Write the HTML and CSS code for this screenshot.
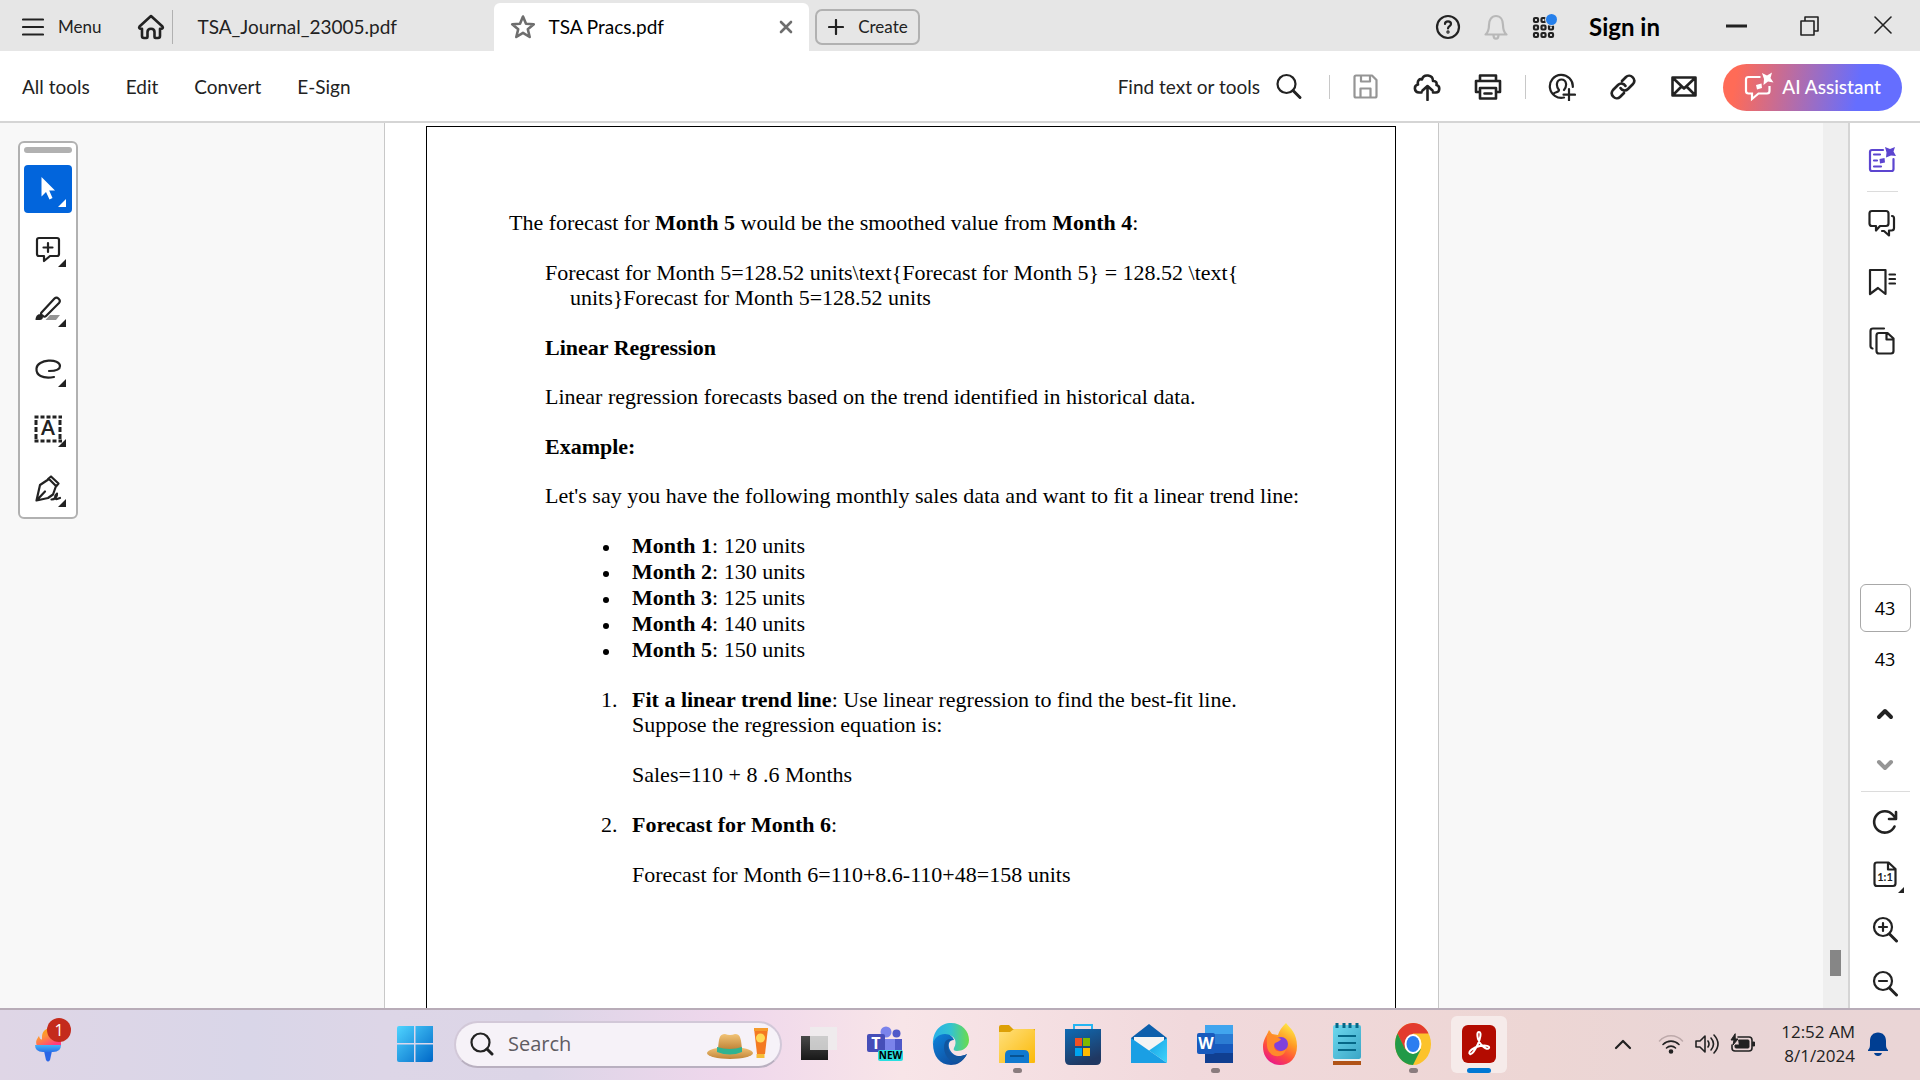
FILE: index.html
```html
<!DOCTYPE html>
<html lang="en">
<head>
<meta charset="utf-8">
<title>TSA Pracs.pdf</title>
<link rel="stylesheet" href="styles.css">
</head>
<body>
<header class="titlebar">
  <button class="menu-btn">
    <svg width="22" height="20" viewBox="0 0 22 20" class="ico"><path d="M1 2.500h20M1 10h20M1 17.500h20"/></svg>
    Menu
  </button>
  <button class="home-btn" aria-label="Home">
    <svg width="28" height="26" viewBox="0 0 28 26" class="ico heavy"><path d="M14 2 2.500 12.500c-.9 1 0 2.300 1.200 2.300H5V22q0 2 2 2h2.500q1 0 1-1v-5q0-3.200 3.500-3.200t3.500 3.200v5q0 1 1 1H21q2 0 2-2v-7.200h1.300c1.200 0 2.100-1.300 1.200-2.300z"/></svg>
  </button>
  <span class="tab-divider"></span>
  <button class="tab">TSA_Journal_23005.pdf</button>
  <div class="tab active">
    <button class="star" aria-label="Star file"><svg width="26" height="26" viewBox="0 0 26 26" class="ico heavy grey"><path d="m13 2.500 3 7.200 7.800.6-6 5 1.900 7.700-6.700-4.200L6.300 23l1.900-7.700-6-5 7.800-.6z"/></svg></button>
    <span class="tab-name">TSA Pracs.pdf</span>
    <button class="tab-close" aria-label="Close tab"><svg width="14" height="14" viewBox="0 0 14 14" class="ico heavy grey"><path d="m2 2 10 10M12 2 2 12"/></svg></button>
  </div>
  <button class="create-btn">
    <svg width="16" height="16" viewBox="0 0 16 16" class="ico"><path d="M8 1v14M1 8h14"/></svg>
    Create
  </button>
  <div class="title-actions">
    <button aria-label="Help"><svg width="26" height="26" viewBox="0 0 26 26" class="ico"><circle cx="13" cy="13" r="11"/><path d="M10 10c0-3.500 6-3.500 6 0 0 2-3 2.200-3 4.500"/><circle cx="13" cy="18" r=".6"/></svg></button>
    <button aria-label="Notifications"><svg width="26" height="28" viewBox="0 0 26 28" class="ico pale"><path d="M2.500 21.500C5 19.500 6 17 6 12c0-5 2.500-9 7-9s7 4 7 9c0 5 1 7.500 3.500 9.500zM10.500 22c0 5 5 5 5 0"/></svg></button>
    <button aria-label="Apps"><svg width="28" height="28" viewBox="0 0 28 28" class="ico"><g><rect x="3" y="5" width="4" height="4" rx="1"/><rect x="10.500" y="5" width="4" height="4" rx="1"/><rect x="3" y="12.500" width="4" height="4" rx="1"/><rect x="10.500" y="12.500" width="4" height="4" rx="1"/><rect x="18" y="12.500" width="4" height="4" rx="1"/><rect x="3" y="20" width="4" height="4" rx="1"/><rect x="10.500" y="20" width="4" height="4" rx="1"/><rect x="18" y="20" width="4" height="4" rx="1"/></g><circle cx="20.500" cy="6.500" r="6.500" fill="#e6e6e6" stroke="none"/><circle cx="20.500" cy="6.500" r="5.500" fill="#2680eb" stroke="none"/></svg></button>
    <a class="sign-in" href="#">Sign in</a>
  </div>
  <div class="window-actions">
    <button aria-label="Minimize"><svg width="22" height="22" viewBox="0 0 22 22"><path d="M0 8.500h21v3H0z" fill="#222"/></svg></button>
    <button aria-label="Restore"><svg width="22" height="22" viewBox="0 0 22 22" class="ico thin"><path d="M2 5h13v14H2zM6 5V1h13v14h-4"/></svg></button>
    <button aria-label="Close"><svg width="22" height="22" viewBox="0 0 22 22" class="ico thin"><path d="m3 1 16 16M19 1 3 17"/></svg></button>
  </div>
</header>

<nav class="toolbar">
  <div class="tool-menu">
    <button>All tools</button><button>Edit</button><button>Convert</button><button>E-Sign</button>
  </div>
  <div class="tool-icons">
    <button class="find">Find text or tools
      <svg width="28" height="28" viewBox="0 0 28 28" class="ico"><circle cx="11.500" cy="11" r="9"/><path d="m18 17.500 7 7" stroke-width="3"/></svg></button>
    <span class="sep"></span>
    <div class="icon-set">
      <button aria-label="Save"><svg width="28" height="28" viewBox="0 0 28 28" class="ico faint"><path d="M4 2.500h16l4.500 4.500v16q0 1.500-1.500 1.500H4q-1.500 0-1.500-1.500V4Q2.500 2.500 4 2.500zM9 3v5.500h9V3M8.500 24v-8.500h10V24"/></svg></button>
      <button aria-label="Upload"><svg width="28" height="28" viewBox="0 0 28 28" class="ico heavy"><path d="M8.500 19.500H6c-5 0-5.500-7-1-8C4 7 7 5.500 9 6.500c1.500-6 11-5 11 1.500 3-.5 4 2 3.500 4 4 1 3.500 7.500-.5 7.500h-3M14.500 27V14M9.500 17.500l5-4.500 5 4.500"/></svg></button>
      <button aria-label="Print"><svg width="28" height="28" viewBox="0 0 28 28" class="ico heavy"><path d="M6 8V2.500h16V8M6 19H2V8h24v11h-4M6 15h16v10.500H6zM10.500 20.500h7"/></svg></button>
    </div>
    <span class="sep"></span>
    <div class="icon-set">
      <button aria-label="Share"><svg width="28" height="28" viewBox="0 0 28 28" class="ico"><path d="M16 24.500A11.500 11.500 0 1 1 24.800 14M5.500 21c1-2 5.500-1.500 5.500-4-3.500-4-2.500-10.500 2.500-10.500S19.500 13 16 17M21 16v11.500M15.500 21.700H27"/></svg></button>
      <button aria-label="Copy link"><svg width="28" height="28" viewBox="0 0 28 28" class="ico heavy"><path d="m13 8 4-4c4-4 11 2 7 7l-5 5c-2.500 2.500-6 1.500-7.500-1M15 20l-4 4c-4 4-11-2-7-7l5-5c2.500-2.500 6-1.500 7.500 1"/></svg></button>
      <button aria-label="Email"><svg width="28" height="28" viewBox="0 0 28 28" class="ico heavy"><path d="M2.500 4.500h23v18h-23zM3 5l11 10.500L25 5M3 22l8.500-8.500M25 22l-8.500-8.500"/></svg></button>
    </div>
    <button class="ai-btn">
      <svg width="30" height="30" viewBox="0 0 30 30"><path d="M16.500 5H4.500Q2 5 2 7.500V19q0 2.500 2.500 2.500H8V27l6.500-5.500H23q2.500 0 2.500-2.500v-5" fill="none" stroke="#fff" stroke-width="2.200"/><path d="m18 1 5 2.500L28 .5 26.500 6l3 4.500L24 9.500 19.500 13 20 7z" fill="#fff"/><path d="m12 13 5.500-1.500L18 16l-5 1.500z" fill="#fff"/></svg>
      AI Assistant
    </button>
  </div>
</nav>

<main class="workspace">
  <div class="canvas">
    <aside class="palette" aria-label="Quick tools">
      <span class="grip"></span>
      <button class="selected" aria-label="Select"><svg width="28" height="28" viewBox="0 0 28 28"><path d="M7.500 2v19.500l4.500-4.500 3.500 7.500 3-1.500-3.300-7.500H21z" fill="#fff"/></svg></button>
      <button aria-label="Add comment"><svg width="28" height="28" viewBox="0 0 28 28" class="ico"><path d="M5 3h18q2 0 2 2v14q0 2-2 2h-7l-6 5v-5H5q-2 0-2-2V5q0-2 2-2zM14 8v9M9.500 12.500h9"/></svg></button>
      <button aria-label="Highlight"><svg width="28" height="28" viewBox="0 0 28 28" class="ico"><path d="m7.500 17.500 13-14c2.500-2.500 7 1.500 4.500 4.500l-13 13q-1.500 1.500-3 0L7.500 20q-1-1.200 0-2.500z"/><path d="M1.500 25c0-4 2.500-6.500 5-5.500l2.500 2.500c0 2-1.500 3-3 3z" fill="#222" stroke="none"/><path d="m16 20h10l-4 5H11.500z" fill="#959595" stroke="none"/></svg></button>
      <button aria-label="Draw"><svg width="28" height="28" viewBox="0 0 28 28" class="ico"><path d="M20 22C8 24 2 20 2.500 13.500 3 4 26 3 26 11c0 3-4 5-11 5"/></svg></button>
      <button aria-label="Text select"><svg width="28" height="28" viewBox="0 0 28 28" class="ico"><path d="M.5 2h28M.5 26h28" stroke-width="3" stroke-dasharray="4 2" stroke-linecap="butt"/><path d="M2 5v20M26 5v20" stroke-width="3" stroke-dasharray="5 2" stroke-linecap="butt"/><text class="glyph-a" x="14" y="20" text-anchor="middle">A</text></svg></button>
      <button aria-label="Sign"><svg width="28" height="28" viewBox="0 0 28 28" class="ico"><path d="M2.500 25.500 6 10l9-6 7 7-3 8.500-5 3.500zM3 25l8-8.500M14 4l3-2.500 7.500 7L22 11.500M17.500 24.500c3 0 6-3 5.500-6-2.500 2-2.500 6 0 5.500l3-1"/></svg></button>
    </aside>
    <div class="sheet">
      <article class="frame">
        <p>The forecast for <b>Month 5</b> would be the smoothed value from <b>Month 4</b>:</p>
        <section class="indent">
          <p class="hanging">Forecast for Month 5=128.52 units\text{Forecast for Month 5} = 128.52 \text{<br>units}Forecast for Month 5=128.52 units</p>
          <h2>Linear Regression</h2>
          <p>Linear regression forecasts based on the trend identified in historical data.</p>
          <h2>Example:</h2>
          <p>Let's say you have the following monthly sales data and want to fit a linear trend line:</p>
          <ul>
            <li><b>Month 1</b>: 120 units</li>
            <li><b>Month 2</b>: 130 units</li>
            <li><b>Month 3</b>: 125 units</li>
            <li><b>Month 4</b>: 140 units</li>
            <li><b>Month 5</b>: 150 units</li>
          </ul>
          <ol>
            <li><p><b>Fit a linear trend line</b>: Use linear regression to find the best-fit line.<br>Suppose the regression equation is:</p><p>Sales=110 + 8 .6 Months</p></li>
            <li><p><b>Forecast for Month 6</b>:</p><p>Forecast for Month 6=110+8.6-110+48=158 units</p></li>
          </ol>
        </section>
      </article>
    </div>
  </div>
  <div class="scrollbar"><span class="thumb"></span></div>
  <aside class="rail">
    <div class="rail-top">
      <button aria-label="AI summary"><svg width="28" height="28" viewBox="0 0 28 28" class="ico violet"><path d="M15 4H4Q2 4 2 6v17q0 2 2 2h19.500q2 0 2-2V13M6 8.500h6M6 14.500h3M6 20.500h7"/><path d="m17 1 5 2 5-2-1.500 4.500L28 10l-5-.5-5 2 .5-5z" fill="#5c45d0" stroke="none"/><path d="m11.500 13 5-1 .5 4.500-5 1z" fill="#5c45d0" stroke="none"/></svg></button>
      <span class="rule"></span>
      <button aria-label="Comments"><svg width="28" height="28" viewBox="0 0 28 28" class="ico"><path d="M4 2h14q2.500 0 2.500 2.500v10q0 2.500-2.500 2.500h-6l-4 4.500V17H4q-2.500 0-2.500-2.500v-10Q1.500 2 4 2zM24 7q2 0 2 2.500V19q0 2.500-2.500 2.500H21v5L16 22h-2"/></svg></button>
      <button aria-label="Bookmarks"><svg width="28" height="28" viewBox="0 0 28 28" class="ico"><path d="M2 2h15.500v24L10 20l-8 6zM21.500 6.500H27M21.500 11H27M21.500 15.500H27"/></svg></button>
      <button aria-label="Pages"><svg width="28" height="28" viewBox="0 0 28 28" class="ico"><path d="M16 1.500H5Q2.500 1.500 2.500 4v15q0 2 2 2.500M11 6h8.500l6 5.500V24q0 2.500-2.500 2.500H11Q8.500 26.500 8.500 24V8.500Q8.500 6 11 6zM18.500 6v6.500H25"/></svg></button>
    </div>
    <div class="rail-bottom">
      <input class="page-input" type="text" value="43" aria-label="Current page">
      <span class="page-total">43</span>
      <button class="up" aria-label="Previous page"><svg width="28" height="28" viewBox="0 0 28 28" class="ico bold"><path d="m8 17 6-6 6 6"/></svg></button>
      <button class="down" aria-label="Next page"><svg width="28" height="28" viewBox="0 0 28 28" class="ico bold faint"><path d="m8 11 6 6 6-6"/></svg></button>
      <span class="rule wide"></span>
      <button aria-label="Rotate"><svg width="28" height="28" viewBox="0 0 28 28" class="ico"><path d="M23.500 19.500A10.700 10.700 0 1 1 22 8l2.500 3M25 5v7h-7" stroke-width="2.600"/></svg></button>
      <button class="fit" aria-label="Page view"><svg width="28" height="28" viewBox="0 0 28 28" class="ico"><path d="M6 1.500h11.500l7 6.500v14.500q0 2.500-2.500 2.500H6q-2.500 0-2.500-2.500V4Q3.500 1.500 6 1.500zM17 2v6.500h7"/><text class="glyph-11" x="14" y="20" text-anchor="middle">1:1</text></svg></button>
      <button aria-label="Zoom in"><svg width="28" height="28" viewBox="0 0 28 28" class="ico"><circle cx="12" cy="12" r="9"/><path d="m18.500 19 7 7" stroke-width="3"/><path d="M12 8v8M8 12h8"/></svg></button>
      <button aria-label="Zoom out"><svg width="28" height="28" viewBox="0 0 28 28" class="ico"><circle cx="12" cy="12" r="9"/><path d="m18.500 19 7 7" stroke-width="3"/><path d="M8 12h8"/></svg></button>
    </div>
  </aside>
</main>

<footer class="taskbar">
  <svg width="0" height="0" class="defs"><defs>
    <linearGradient id="win" x2="1" y2="1"><stop stop-color="#4fd4ff"/><stop offset="1" stop-color="#0067c7"/></linearGradient>
    <linearGradient id="flame" x2=".6" y2="1"><stop stop-color="#f5b400"/><stop offset=".5" stop-color="#ff9138"/><stop offset="1" stop-color="#ff3d80"/></linearGradient>
    <linearGradient id="torch" x2="0" y2="1"><stop stop-color="#44b2f8"/><stop offset="1" stop-color="#2a72e8"/></linearGradient>
    <linearGradient id="hat" x2="0" y2="1"><stop stop-color="#f2c477"/><stop offset="1" stop-color="#c18539"/></linearGradient>
    <linearGradient id="edgeTop"><stop stop-color="#28afe8"/><stop offset=".5" stop-color="#34c3d0"/><stop offset="1" stop-color="#6bdc4b"/></linearGradient>
    <linearGradient id="edgeLow" x2="1" y2="1"><stop stop-color="#0d83dc"/><stop offset="1" stop-color="#103f8d"/></linearGradient>
    <linearGradient id="folder" x2="1" y2="1"><stop stop-color="#ffe07d"/><stop offset="1" stop-color="#fbb908"/></linearGradient>
    <linearGradient id="store" x2=".4" y2="1"><stop stop-color="#0f6bb4"/><stop offset="1" stop-color="#203862"/></linearGradient>
    <linearGradient id="mail" x2="1" y2="1"><stop stop-color="#12a0e4"/><stop offset="1" stop-color="#40d4fb"/></linearGradient>
    <linearGradient id="fox" x1=".8" x2=".3" y2="1"><stop stop-color="#fff04a"/><stop offset=".4" stop-color="#ff9a24"/><stop offset=".7" stop-color="#ff4c3c"/><stop offset="1" stop-color="#e9168c"/></linearGradient>
    <linearGradient id="note" x2="1" y2="1"><stop stop-color="#6cd8ee"/><stop offset="1" stop-color="#3ba6c6"/></linearGradient>
    <linearGradient id="dark" x2="0" y2="1"><stop stop-color="#494949"/><stop offset="1" stop-color="#181818"/></linearGradient>
  </defs></svg>
  <div class="tb-left">
    <button class="widgets" aria-label="Widgets">
      <svg width="32" height="42" viewBox="0 0 32 42"><path d="M4 23c-2-5 0-7 2-10 1 4 3 4 3 3 0-5 0-9 9-12l10 9v10z" fill="url(#flame)"/><path d="M11 28h8l-2 9q-2 3-4 0z" fill="#2a66e6"/><path d="M2 22h26q0 7-8 7H10q-8 0-8-7z" fill="url(#torch)"/></svg>
      <span class="badge">1</span>
    </button>
  </div>
  <div class="tb-center">
    <button class="app" aria-label="Start"><svg width="36" height="36" viewBox="0 0 36 36" fill="url(#win)"><path d="M2 0h34v34q0 2-2 2H2q-2 0-2-2V2q0-2 2-2z"/><path d="M17 0h1.500v36H17zM0 17h36v1.500H0z" fill="#dcd7ec"/></svg></button>
    <div class="search">
      <svg width="24" height="24" viewBox="0 0 24 24" class="ico"><circle cx="10.500" cy="10.500" r="9"/><path d="m17 17 5 5" stroke-width="3"/></svg>
      <input type="search" placeholder="Search" aria-label="Search">
      <svg width="62" height="34" viewBox="0 0 62 34"><ellipse cx="23" cy="26" rx="23" ry="6" fill="url(#hat)"/><path d="M11 22C12 12 12 7 18 7q5 2 10 0c6 0 6 6 7 15z" fill="url(#hat)"/><path d="M10 20q13 4 25 0v5q-12 5-25 0z" fill="#2fb391"/><path d="M47 1h14l-3 26h-8z" fill="#f47a22"/><path d="M47 1h14v3H47z" fill="#f69b2c"/><circle cx="53.500" cy="11" r="4.500" fill="#ffd955"/><path d="M49.500 27h8v4h-8z" fill="#f6bd38"/></svg>
    </div>
    <button class="app" aria-label="Task view"><svg width="36" height="36" viewBox="0 0 36 36"><path d="M0 10h27v24H0z" fill="url(#dark)"/><path d="M9 1h27v23H9z" fill="#eee" opacity=".8"/></svg></button>
    <button class="app" aria-label="Teams"><svg width="40" height="38" viewBox="0 0 40 38"><circle cx="21" cy="7" r="5.500" fill="#7b83eb"/><circle cx="31.500" cy="8.500" r="4" fill="#5059c9"/><path d="M27 14h10v15H27z" fill="#5059c9"/><path d="M15 14h15v16H15z" fill="#7b83eb"/><rect x="2" y="9" width="18" height="18" rx="2" fill="#464eb8"/><text class="t-mark" x="11" y="24" text-anchor="middle">T</text><rect x="13" y="25" width="25" height="11" rx="2" fill="#29dfe0"/><text class="new-mark" x="25.500" y="34" text-anchor="middle">NEW</text></svg></button>
    <button class="app" aria-label="Edge"><svg width="38" height="42" viewBox="0 0 38 42"><path d="M1 22C0 8 9 0 19 0c11 0 18 8 18 17 0 8-7 11-12 11-3 0-4-1-3-3 4-7 0-13-7-13C8 12 2 16 1 22z" fill="url(#edgeTop)"/><path d="M1 21c1-6 6-10 12-10 5 0 8 3 9 6-6 0-6 6-4 10 3 6 10 8 17 4-4 8-10 11-16 11C8 42 1 33 1 21z" fill="url(#edgeLow)"/><path d="M13 19c-3 8 1 18 11 21 4-1 8-3 11-9-10 5-20 1-19-9 0-4 2-5 5-5-3-2-6-1-8 2z" fill="#11559f"/></svg></button>
    <button class="app running" aria-label="File Explorer"><svg width="36" height="40" viewBox="0 0 36 40"><path d="M0 3q0-2 2-2h8l4 4h22v5H0z" fill="#dda006"/><path d="M0 8h11l4-3h19q2 0 2 2v31q0 1-1 1H0z" fill="url(#folder)"/><path d="M6 39V31q0-5 5-5h14q5 0 5 5v8z" fill="#1179cf"/><path d="M11 32h14" stroke="#075393" stroke-width="2"/></svg></button>
    <button class="app" aria-label="Microsoft Store"><svg width="36" height="42" viewBox="0 0 36 42"><path d="M9 8V2h18v6" fill="none" stroke="#26b5f2" stroke-width="2"/><path d="M0 6h36v31q0 5-5 5H5q-5 0-5-5z" fill="url(#store)"/><path d="M10 15h7v8h-7z" fill="#f25022"/><path d="M18 15h7v8h-7z" fill="#7fba00"/><path d="M10 25h7v8h-7z" fill="#00a4ef"/><path d="M18 25h7v8h-7z" fill="#ffb900"/></svg></button>
    <button class="app" aria-label="Mail"><svg width="36" height="40" viewBox="0 0 36 40"><path d="M0 14 18 0l18 14v8H0z" fill="#0c5fac"/><path d="M3 13h30v10L18 30 3 23z" fill="#f4f4f4"/><path d="M0 14l36 25H0z" fill="#1a9fe4"/><path d="M36 14v25L18 26.500z" fill="url(#mail)"/></svg></button>
    <button class="app running" aria-label="Word"><svg width="36" height="40" viewBox="0 0 36 40"><path d="M8 1h28v10H8z" fill="#41a5ee"/><path d="M8 10h28v10H8z" fill="#2b7cd3"/><path d="M8 20h28v9H8z" fill="#185abd"/><path d="M8 29h28v10H8z" fill="#103f91"/><rect y="9" width="18" height="21" rx="2" fill="#185abd"/><text class="w-mark" x="9" y="25" text-anchor="middle">W</text></svg></button>
    <button class="app" aria-label="Firefox"><svg width="36" height="42" viewBox="0 0 36 42"><path d="M23 0c4 5 11 10 11 23C34 35 27 42 17 42S0 34 0 24C0 17 3 14 6 7l3 4 6 1c1-4 4-8 8-12z" fill="url(#fox)"/><circle cx="18" cy="21" r="7" fill="#8040dc"/><path d="M4 12c5-2 9 2 14 4-2 4-7 2-7 7 0 6 8 7 12 3-2 11-18 9-19-3z" fill="#ff8a2b"/></svg></button>
    <button class="app" aria-label="Notepad"><svg width="30" height="44" viewBox="0 0 30 44"><path d="M1 38h28v5H1z" fill="#b15317"/><path d="M1 34h28v5H1z" fill="#eee"/><rect x="1" y="3" width="28" height="34" rx="2" fill="url(#note)"/><path d="M6 14h18M6 21h18M6 28h18" stroke="#056787" stroke-width="2"/><path d="M5 1v5M12 1v5M18 1v5M25 1v5" stroke="#056787" stroke-width="3"/></svg></button>
    <button class="app running" aria-label="Chrome"><svg width="36" height="42" viewBox="0 0 36 42"><ellipse cx="18" cy="21" rx="18" ry="21" fill="#fcc32c"/><path d="M2.500 10.500C9-3 27-4 33.500 10.500H18L10 27z" fill="#e33b2e"/><path d="M2.500 10.500C-4 24 3 41 18 42l8-16-8 5-8-5z" fill="#229a48"/><ellipse cx="18" cy="21" rx="8.500" ry="10" fill="#fff"/><ellipse cx="18" cy="21" rx="6.500" ry="8" fill="#2b7df0"/></svg></button>
    <button class="app current" aria-label="Acrobat"><svg width="34" height="38" viewBox="0 0 34 38"><rect width="34" height="38" rx="6" fill="#b30b00"/><path d="M8 29c-3-2 4-7 10-8 6-1 10 0 9 2-2 3-9-3-11-9-1-4-1-7 1-7 3 0 1 7-1 12-3 6-6 11-8 10z" fill="none" stroke="#fff" stroke-width="2"/></svg></button>
  </div>
  <div class="tb-right">
    <button aria-label="Hidden icons"><svg width="18" height="12" viewBox="0 0 18 12" class="ico"><path d="m2 10 7-7 7 7"/></svg></button>
    <button class="status" aria-label="Network, volume and battery">
      <svg width="26" height="22" viewBox="0 0 26 22" class="ico thin"><path d="M1.500 8C8 1 18 1 24.500 8" stroke="#bda9aa"/><path d="M5 11.500c4.500-4.500 11.500-4.500 16 0M8.500 15c2.500-2.500 6.500-2.500 9 0"/><circle cx="13" cy="18.500" r="1.500" fill="#222"/></svg>
      <svg width="26" height="22" viewBox="0 0 26 22" class="ico thin"><path d="M2 8h4l5-5v16l-5-5H2zM14 8q2 3 0 6M17 5q5 6 0 12M20 2q8 9 0 18"/></svg>
      <svg width="26" height="22" viewBox="0 0 26 22" class="ico thin"><path d="M8 4h11q3 0 3 3v8q0 3-3 3H5q-3 0-3-3v-3"/><path d="M9 7h9q1 0 1 1v6q0 1-1 1H6q-1 0-1-1v-2h4zM23 9h1.500v4H23zM5 1 1 7h3L3 12l5-6H5.500z" fill="#222" stroke-width="1"/></svg>
    </button>
    <button class="clock">12:52 AM<br>8/1/2024</button>
    <button class="bell" aria-label="Notifications"><svg width="20" height="24" viewBox="0 0 20 24" fill="#003e92"><path d="M0 18c2-2 2-3 2-9 0-5 3-8.500 8-8.500S18 4 18 9c0 6 0 7 2 9v1H0zM6 21h8q-1 3-4 3t-4-3z"/></svg></button>
  </div>
</footer>
</body>
</html>
```
FILE: styles.css
```css
* { box-sizing: border-box; }
body {
  margin: 0;
  min-height: 100vh;
  display: flex;
  flex-direction: column;
  background: #fff;
  color: #222;
  font: 19px/24px Lato, "Liberation Sans", sans-serif;
}
button {
  display: flex;
  align-items: center;
  justify-content: center;
  margin: 0;
  padding: 0;
  border: 0;
  background: none;
  color: inherit;
  font: inherit;
  white-space: nowrap;
}
svg { display: block; flex: none; }
.ico { fill: none; stroke: #222; stroke-width: 2.2; stroke-linecap: round; stroke-linejoin: round; }
.heavy { stroke-width: 2.6; }
.bold { stroke-width: 4; }
.thin { stroke-width: 1.6; }
.grey { stroke: #6e6e6e; }
.faint { stroke: #959595; }
.pale { stroke: #b8b8b8; }
.violet { stroke: #5c45d0; }
.ico text { fill: #222; stroke: none; font-weight: 700; }
.glyph-a { font-size: 20px; }
.glyph-11 { font-size: 11px; }

/* Title bar */
.titlebar { display: flex; align-items: center; height: 51px; padding: 2px 18px 0 22px; background: #e6e6e6; }
.menu-btn { gap: 14px; font-size: 17px; }
.home-btn { margin: 0 7px 0 36px; }
.tab-divider { width: 1px; height: 34px; background: #b1b1b1; }
.tab { flex: 0 1 321px; justify-content: flex-start; padding-left: 24px; overflow: hidden; }
.tab.active {
  flex-basis: 315px;
  align-self: flex-end;
  display: flex;
  align-items: center;
  height: 48px;
  padding: 0 16px;
  border-radius: 6px 6px 0 0;
  background: #fff;
  color: #000;
}
.tab-name { flex: 1; padding-left: 12px; white-space: nowrap; }
.create-btn { gap: 14px; width: 105px; height: 36px; margin-left: 6px; border: 2px solid #b1b1b1; border-radius: 7px; font-size: 17px; }
.title-actions { display: flex; align-items: center; gap: 22px; margin-left: auto; }
.sign-in { margin-left: 8px; color: #000; font-size: 24px; font-weight: 700; text-decoration: none; white-space: nowrap; }
.window-actions { display: flex; gap: 51px; margin-left: 66px; padding-right: 8px; }

/* Toolbar */
.toolbar { display: flex; align-items: center; justify-content: space-between; height: 72px; padding: 2px 18px 0 22px; border-bottom: 2px solid #d5d5d5; }
.tool-menu { display: flex; gap: 36px; }
.tool-icons, .icon-set { display: flex; align-items: center; }
.icon-set { gap: 33px; }
.find { gap: 15px; margin-right: 3px; }
.sep { width: 1px; height: 24px; margin: 0 22px 0 23px; background: #c8c8c8; }
.ai-btn {
  gap: 8px;
  width: 179px;
  height: 47px;
  margin-left: 25px;
  border-radius: 24px;
  background: linear-gradient(100deg, #ff6b57 8%, #656eff 75%);
  color: #fff;
  font-weight: 500;
}

/* Workspace */
.workspace { flex: 1; display: flex; }
.canvas { flex: 1; display: grid; grid-template-columns: 1fr minmax(0, 1055px) 1fr; background: #f8f8f8; }
.palette {
  justify-self: start;
  align-self: start;
  display: flex;
  flex-direction: column;
  gap: 12px;
  width: 60px;
  margin: 18px 0 0 18px;
  padding: 4px;
  border: 2px solid #b1b1b1;
  border-radius: 6px;
  background: #fff;
}
.grip { height: 6px; border-radius: 3px; background: #b1b1b1; }
.palette button { position: relative; height: 48px; border-radius: 4px; }
.palette .selected { background: #0265dc; }
.palette button::after, .fit::after {
  content: "";
  position: absolute;
  right: 6px;
  bottom: 6px;
  border-style: solid;
  border-width: 0 0 8px 8px;
  border-color: transparent transparent #222;
}
.palette .selected::after { border-bottom-color: #fff; }
.sheet { display: flex; padding: 3px 42px 0 41px; border: solid #c8c8c8; border-width: 0 1px; background: #fff; }
.frame {
  flex: 1;
  padding: 83px 60px 84px 82px;
  border: solid #000;
  border-width: 1px 1px 0;
  color: #000;
  font: 22px/25px "Liberation Serif", serif;
}
.frame p, .frame ol { margin: 0 0 25px; }
.frame h2, .frame ul { margin: 0 0 24px; }
.frame h2 { font: inherit; font-weight: 700; }
.indent { padding-left: 36px; }
.hanging { padding-left: 25px; text-indent: -25px; }
.frame ul, .frame ol { padding-left: 87px; }
.frame ul { line-height: 26px; list-style: none; }
.frame ul li::before { content: ""; float: left; width: 6px; height: 6px; margin: 12px 0 0 -29px; border-radius: 50%; background: #000; }
.frame ol { counter-reset: step; list-style: none; }
.frame ol li { counter-increment: step; }
.frame ol li::before { content: counter(step) "."; float: left; margin-left: -31px; }

.scrollbar { display: flex; flex-direction: column; align-items: center; justify-content: flex-end; width: 25px; padding-bottom: 32px; background: #efefef; }
.thumb { width: 11px; height: 26px; background: #868686; }

.rail { display: flex; flex-direction: column; justify-content: space-between; width: 72px; border-left: 2px solid #d5d5d5; }
.rail-top, .rail-bottom { display: flex; flex-direction: column; align-items: center; }
.rail-top { gap: 31px; padding: 23px 6px 0 0; }
.rule { width: 31px; height: 1px; background: #dcdcdc; }
.rail-top .rule { margin: -14px 0; }
.rail-bottom { gap: 26px; padding-bottom: 11px; }
.page-input { width: 51px; height: 48px; margin-bottom: -13px; border: 1px solid #a8a8a8; border-radius: 6px; font: 18px/24px "Open Sans", sans-serif; text-align: center; color: #000; }
.page-total { height: 28px; margin-bottom: 1px; color: #000; font: 18px/28px "Open Sans", sans-serif; }
.rule.wide { width: 49px; margin: -14px 0 -11px; }
.down { margin-top: -3px; }
.fit { position: relative; }
.fit::after { right: -5px; bottom: -4px; border-width: 0 0 6px 6px; }

/* Taskbar */
.taskbar {
  display: flex;
  align-items: center;
  height: 72px;
  padding: 0 26px 2px 0;
  border-top: 2px solid #b8acb8;
  background: linear-gradient(90deg, #dfd6e6 0, #d9d6e8 13%, #ddd6e7 20%, #dcd5e7 28%, #efd7ec 38%, #f8e5e8 47%, #f1d9dc 62%, #edd6d4 80%, #e9d5d6 90%, #ead5d6 100%);
  font-family: "Open Sans", sans-serif;
}
.defs { position: absolute; }
.tb-left, .tb-right { flex: 1; display: flex; align-items: center; }
.widgets { position: relative; margin-left: 33px; }
.badge { position: absolute; left: 14px; top: -5px; width: 24px; height: 24px; border-radius: 50%; background: #c42b1c; color: #fff; font-size: 16px; line-height: 24px; text-align: center; }
.tb-center { display: flex; align-items: center; }
.app { position: relative; width: 66px; height: 57px; }
.search { display: flex; align-items: center; width: 328px; height: 47px; margin: 0 4px 0 6px; padding: 0 11px 0 14px; border: 2px solid #d2c8d8; border-bottom-color: #b9b0c0; border-radius: 24px; background: #f6f2f8; }
.search input { flex: 1; min-width: 0; margin-left: 14px; padding: 0; border: 0; outline: 0; background: none; font: 20px/24px "Open Sans", sans-serif; }
.search input::placeholder { color: #5f5c62; }
.running::after, .current::after { content: ""; position: absolute; bottom: 0; width: 9px; height: 5px; border-radius: 3px; background: #8a7c7e; }
.current { width: 56px; margin: 0 5px; border-radius: 6px; background: #f6ebea; }
.current::after { width: 24px; background: #0078d4; }
.t-mark, .w-mark { fill: #fff; font: 700 16px "Open Sans", sans-serif; }
.new-mark { fill: #000; font: 700 10px "Open Sans", sans-serif; }
.tb-right { justify-content: flex-end; }
.status { gap: 10px; margin: 0 25px 0 26px; }
.clock { font-size: 17px; line-height: 24px; text-align: right; }
.bell { width: 32px; margin-left: 7px; }
```
